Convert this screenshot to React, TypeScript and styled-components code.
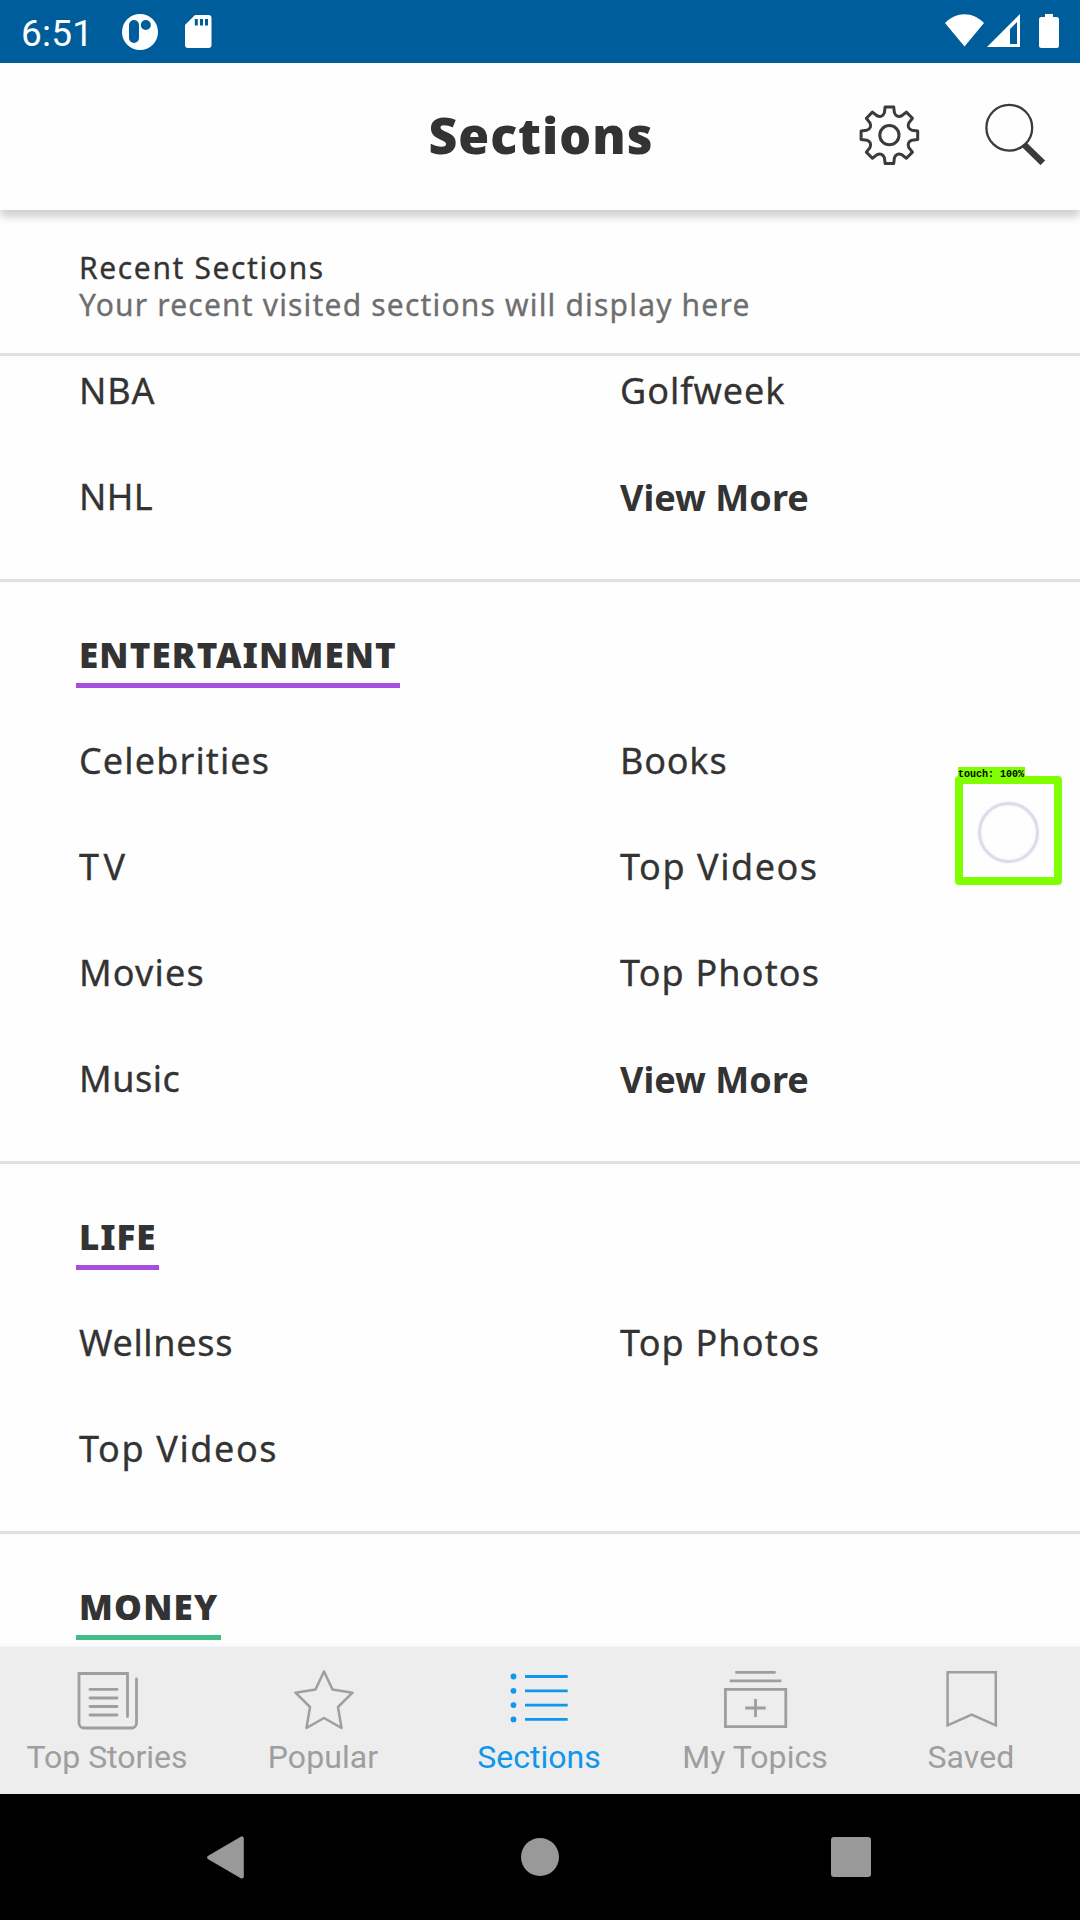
import React from "react";
import styled, { createGlobalStyle } from "styled-components";

const GlobalStyle = createGlobalStyle`
  * { box-sizing: border-box; }
  body { margin: 0; background: #fefefe; }
`;

const TEXT_FONT = `"Noto Sans", "Open Sans", sans-serif`;
const SYSTEM_FONT = `Roboto, "Noto Sans", sans-serif`;

const Screen = styled.div`
  position: relative;
  display: flex;
  flex-direction: column;
  width: 1080px;
  height: 1920px;
  overflow: hidden;
  background: #fefefe;
  color: #333;
  font-family: ${TEXT_FONT};
`;

const StatusBar = styled.div`
  display: flex;
  flex: none;
  justify-content: space-between;
  height: 63px;
  padding: 0 21px 0 21px;
  background: #005d9b;
`;

const StatusGroup = styled.div`
  display: flex;
  align-items: flex-start;
`;

const Clock = styled.span`
  width: 101px;
  color: #fff;
  font: 400 37px/67px ${SYSTEM_FONT};
  letter-spacing: 0.2px;
`;

const Header = styled.header`
  position: relative;
  z-index: 1;
  display: grid;
  flex: none;
  grid-template-columns: 1fr auto 1fr;
  height: 147px;
  background: #fefefe;
  box-shadow: 0 7px 8px rgba(0, 0, 0, 0.18);
`;

const Title = styled.h1`
  grid-column: 2;
  margin: 0;
  padding-left: 2px;
  font-size: 50px;
  font-weight: 900;
  line-height: 145px;
  letter-spacing: 1px;
`;

const HeaderActions = styled.div`
  display: flex;
  justify-content: flex-end;
  gap: 65px;
  padding: 40px 33px 0 0;
`;

const Recent = styled.section`
  flex: none;
  height: 146px;
  padding: 39px 79px 0;
  border-bottom: 3px solid #e0e0e0;
  font-size: 30px;
  line-height: 37px;
  -webkit-text-stroke: 0.3px currentColor;
`;

const RecentTitle = styled.div`
  letter-spacing: 1.62px;
`;

const RecentHint = styled.div`
  color: #6e6e6e;
  letter-spacing: 1.18px;
`;

const SectionList = styled.main`
  flex: 1;
  min-height: 0;
  overflow: hidden;
`;

/* The list is scrolled so that the first visible row is partly under the recent panel. */
const Scrolled = styled.div`
  margin-top: -19px;
`;

const Section = styled.section`
  padding-bottom: 30px;
  border-bottom: 3px solid #e0e0e0;
`;

const HeadingRow = styled.div`
  display: flex;
  padding: 49px 76px 19px;
`;

const Heading = styled.h2<{ $accent: string; $spacing: number }>`
  margin: 0;
  padding: 0 3px 5px 3px;
  border-bottom: 5px solid ${(p) => p.$accent};
  font-size: 35px;
  font-weight: 900;
  line-height: 47px;
  letter-spacing: ${(p) => p.$spacing}px;
`;

const Links = styled.div`
  display: grid;
  grid-template-columns: 541px 1fr;
  grid-auto-rows: 106px;
  padding-left: 79px;
`;

const SectionLink = styled.a<{ $spacing: number; $more?: boolean }>`
  height: 106px;
  font-size: 36px;
  font-weight: ${(p) => (p.$more ? 700 : 400)};
  line-height: ${(p) => (p.$more ? 109 : 107)}px;
  letter-spacing: ${(p) => p.$spacing}px;
  white-space: nowrap;
  -webkit-text-stroke: ${(p) => (p.$more ? "0" : "0.3px currentColor")};
`;

const TabBar = styled.nav`
  position: relative;
  display: grid;
  flex: none;
  grid-template-columns: repeat(5, 1fr);
  height: 147px;
  background: #ededed;
  box-shadow: 0 -1px 4px rgba(0, 0, 0, 0.06);
`;

const Tab = styled.div<{ $active?: boolean }>`
  display: flex;
  flex-direction: column;
  align-items: center;
  gap: 6px;
  padding-top: 21px;
  color: ${(p) => (p.$active ? "#0f97ec" : "#9e9e9e")};
`;

const TabLabel = styled.span<{ $spacing: number }>`
  margin-right: 2px;
  font: 400 32px/38px ${SYSTEM_FONT};
  letter-spacing: ${(p) => p.$spacing}px;
`;

const SystemNav = styled.div`
  display: grid;
  flex: none;
  grid-template-columns: 1fr 38px 1fr;
  align-items: center;
  height: 126px;
  padding: 0 209px 0 207px;
  background: #000;
`;

const HomeKey = styled.span`
  width: 38px;
  height: 38px;
  margin-left: 1px;
  border-radius: 50%;
  background: #999;
`;

const RecentsKey = styled.span`
  justify-self: end;
  width: 40px;
  height: 40px;
  border-radius: 3px;
  background: #999;
`;

const TouchMarker = styled.div`
  position: absolute;
  z-index: 2;
  left: 955px;
  top: 776px;
  display: flex;
  align-items: center;
  justify-content: center;
  width: 107px;
  height: 109px;
  padding: 3px 0 0;
  border: 8px solid #80ff00;
  border-radius: 4px;
`;

const TouchLabel = styled.span`
  position: absolute;
  left: -5px;
  top: -17px;
  height: 17px;
  width: 67px;
  background: #80ff00;
  color: #000;
  font: 700 10px/15px "Liberation Mono", monospace;
  white-space: nowrap;
`;

const TouchRing = styled.span`
  width: 61px;
  height: 61px;
  border: 3px solid #dedaec;
  border-radius: 50%;
  box-shadow: 0 0 3px #efedf6, inset 0 0 3px #efedf6;
`;

/* Eight-tooth outline, built by turning one tooth round the centre. */
function gearPath(): string {
  const at = (x: number, y: number, deg: number) => {
    const a = (deg * Math.PI) / 180;
    const px = x * Math.cos(a) - y * Math.sin(a);
    const py = x * Math.sin(a) + y * Math.cos(a);
    return `${px.toFixed(2)} ${py.toFixed(2)}`;
  };
  let d = `M${at(-5, -22.5, 0)}`;
  for (let k = 0; k < 8; k++) {
    const t = k * 45;
    d += `L${at(-4.3, -28.3, t)}L${at(4.3, -28.3, t)}L${at(5, -22.5, t)}`;
    d += `Q${at(0, -18.6, t + 22.5)} ${at(-5, -22.5, t + 45)}`;
  }
  return d + "Z";
}

const GearIcon = () => (
  <svg width="62" height="62" viewBox="-31.4 -32.2 62 62" fill="none" stroke="#3b3b3b" strokeWidth="3" strokeLinejoin="round">
    <path d={gearPath()} />
    <circle r="9.6" />
  </svg>
);

const SearchIcon = () => (
  <svg width="62" height="62" viewBox="0 0 62 62" fill="none" stroke="#3b3b3b">
    <circle cx="24.3" cy="24.7" r="22.9" strokeWidth="2.3" />
    <path d="M39.5 42L57.8 59.8" strokeWidth="6.6" />
  </svg>
);

const tabIcons = {
  stories: (
    <>
      <path d="M51.5 48.5V5.500H3V55a5 5 0 0 0 5 5h47.500a5 5 0 0 0 5-5V11" strokeLinecap="round" />
      <path d="M14 21.300h27M14 30h27M14 38.500h27M14 47h27" strokeLinecap="round" />
    </>
  ),
  star: (
    <path d="M32 3.500L40.500 21.500L60.500 24.700L46 39L49.500 60L32 50L14.500 60L18 39L3.500 24.700L23.500 21.500Z" strokeWidth="2.5" strokeLinejoin="round" />
  ),
  list: (
    <>
      <path d="M17 8.500h42.700M17 22.800h42.700M17 37.100h42.700M17 51.400h42.700" />
      <g fill="currentColor" stroke="none">
        <circle cx="5.5" cy="8.5" r="2.9" />
        <circle cx="5.5" cy="22.8" r="2.9" />
        <circle cx="5.5" cy="37.1" r="2.9" />
        <circle cx="5.5" cy="51.4" r="2.9" />
      </g>
    </>
  ),
  topics: (
    <>
      <path d="M11.300 4.300h40.300M5.800 12.900h51.600M21.200 40h20.500M31.500 31v18" />
      <path d="M1.400 21.400h60.400v37.200H1.400z" />
    </>
  ),
  saved: <path d="M7.600 4.200h48.200v53.200L31.700 46.600L7.600 57.400z" strokeWidth="2.5" />,
};

const TabIcon = ({ name }: { name: keyof typeof tabIcons }) => (
  <svg width="64" height="64" viewBox="0 0 64 64" fill="none" stroke="currentColor" strokeWidth="2.8">
    {tabIcons[name]}
  </svg>
);

type LinkItem = { label: string; spacing: number; more?: boolean };
type SectionData = {
  title?: string;
  titleSpacing?: number;
  accent?: string;
  links: LinkItem[];
};

const sections: SectionData[] = [
  {
    links: [
      { label: "NBA", spacing: 0.9 },
      { label: "Golfweek", spacing: 0.95 },
      { label: "NHL", spacing: 0.4 },
      { label: "View More", spacing: 0.05, more: true },
    ],
  },
  {
    title: "ENTERTAINMENT",
    titleSpacing: 1.13,
    accent: "#a64fdb",
    links: [
      { label: "Celebrities", spacing: 1.12 },
      { label: "Books", spacing: 0.8 },
      { label: "TV", spacing: 4.5 },
      { label: "Top Videos", spacing: 1.55 },
      { label: "Movies", spacing: 1.2 },
      { label: "Top Photos", spacing: 1.15 },
      { label: "Music", spacing: 0.5 },
      { label: "View More", spacing: 0.05, more: true },
    ],
  },
  {
    title: "LIFE",
    titleSpacing: 0.9,
    accent: "#a64fdb",
    links: [
      { label: "Wellness", spacing: 0.67 },
      { label: "Top Photos", spacing: 1.15 },
      { label: "Top Videos", spacing: 1.6 },
    ],
  },
  { title: "MONEY", titleSpacing: 1.2, accent: "#45bc85", links: [] },
];

const tabs: { label: string; icon: keyof typeof tabIcons; spacing: number; active?: boolean }[] = [
  { label: "Top Stories", icon: "stories", spacing: -0.03 },
  { label: "Popular", icon: "star", spacing: 0.1 },
  { label: "Sections", icon: "list", spacing: 0, active: true },
  { label: "My Topics", icon: "topics", spacing: 0.05 },
  { label: "Saved", icon: "saved", spacing: 0.1 },
];

export default function App() {
  return (
    <Screen>
      <GlobalStyle />
      <StatusBar>
        <StatusGroup>
          <Clock>6:51</Clock>
          <svg width="90" height="63" viewBox="122 0 90 63">
            <circle cx="140" cy="32" r="18" fill="#fff" />
            <rect x="129" y="20" width="10" height="23" rx="5" fill="#005d9b" />
            <circle cx="145.8" cy="25" r="5" fill="#005d9b" />
            <path d="M195 15h13.500a3 3 0 0 1 3 3v27a3 3 0 0 1-3 3h-20.500a3 3 0 0 1-3-3V25z" fill="#fff" />
            <path d="M194.800 19h3v6.500h-3zM200 19h3v6.500h-3zM205 19h3v6.500h-3z" fill="#005d9b" />
          </svg>
        </StatusGroup>
        <StatusGroup>
          <svg width="115" height="63" viewBox="944 0 115 63" fill="#fff">
            <path d="M945 23C956 11.200 973 11.200 984 23L964.500 46.500Z" />
            <path fillRule="evenodd" d="M987 47L1020 14V47ZM1010 29V44H1017V22Z" />
            <path d="M1045 17v-3h8v3h3.500a2.500 2.500 0 0 1 2.500 2.500v26a2.500 2.500 0 0 1-2.500 2.500h-15a2.500 2.500 0 0 1-2.500-2.500v-26a2.500 2.500 0 0 1 2.500-2.500z" />
          </svg>
        </StatusGroup>
      </StatusBar>
      <Header>
        <Title>Sections</Title>
        <HeaderActions>
          <GearIcon />
          <SearchIcon />
        </HeaderActions>
      </Header>
      <Recent>
        <RecentTitle>Recent Sections</RecentTitle>
        <RecentHint>Your recent visited sections will display here</RecentHint>
      </Recent>
      <SectionList>
        <Scrolled>
          {sections.map((section, i) => (
            <Section key={i}>
              {section.title && (
                <HeadingRow>
                  <Heading $accent={section.accent!} $spacing={section.titleSpacing!}>
                    {section.title}
                  </Heading>
                </HeadingRow>
              )}
              <Links>
                {section.links.map((link) => (
                  <SectionLink key={link.label} $spacing={link.spacing} $more={link.more}>
                    {link.label}
                  </SectionLink>
                ))}
              </Links>
            </Section>
          ))}
        </Scrolled>
      </SectionList>
      <TabBar>
        {tabs.map((tab) => (
          <Tab key={tab.label} $active={tab.active}>
            <TabIcon name={tab.icon} />
            <TabLabel $spacing={tab.spacing}>{tab.label}</TabLabel>
          </Tab>
        ))}
      </TabBar>
      <SystemNav>
        <svg width="37" height="43" viewBox="0 0 37 43" fill="#999" stroke="#999" strokeWidth="4" strokeLinejoin="round">
          <path d="M2.200 21.500L34.800 2.400V40.600Z" />
        </svg>
        <HomeKey />
        <RecentsKey />
      </SystemNav>
      <TouchMarker>
        <TouchLabel>touch: 100%</TouchLabel>
        <TouchRing />
      </TouchMarker>
    </Screen>
  );
}
